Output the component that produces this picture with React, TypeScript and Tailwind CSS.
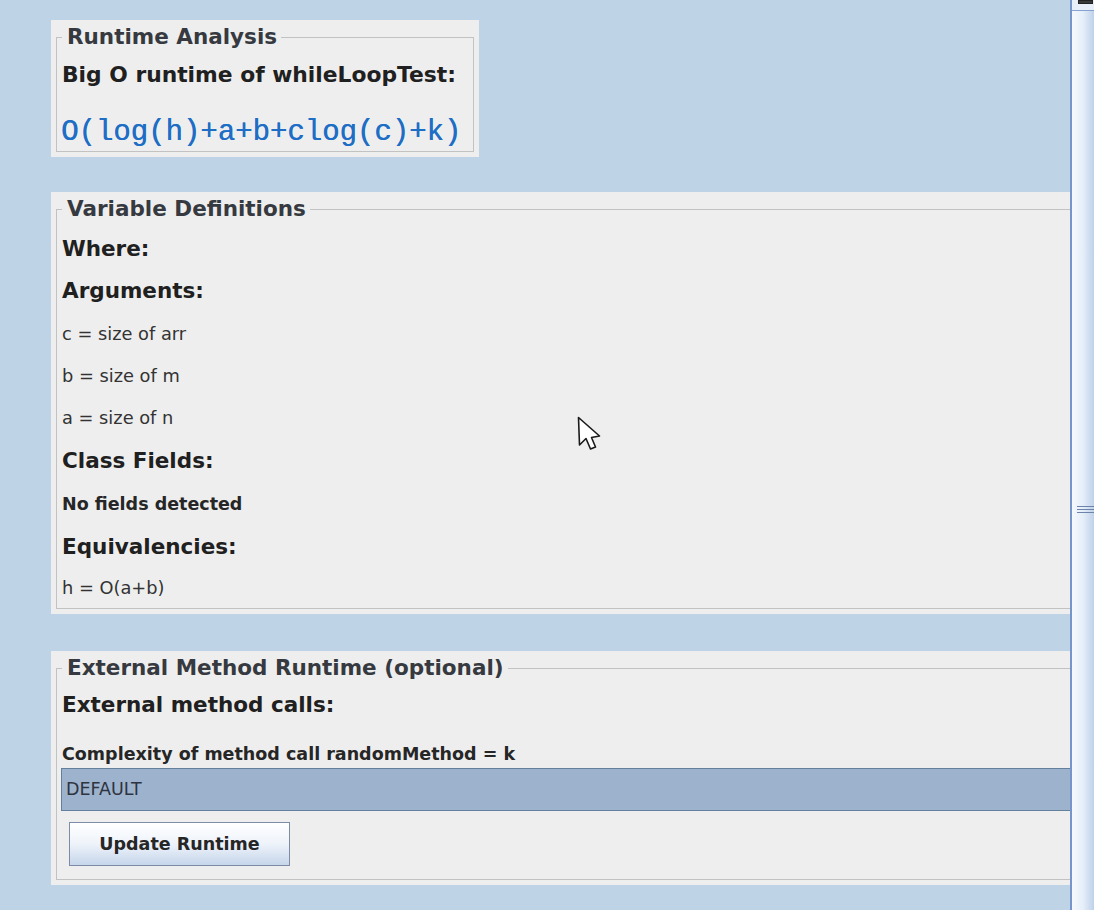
import React from 'react';

const argumentRows = [
  { text: 'c = size of arr', h: 'h-[42px]' },
  { text: 'b = size of m', h: 'h-[42px]' },
  { text: 'a = size of n', h: 'h-[43px]' },
];

function Legend({ children }: { children: React.ReactNode }) {
  return (
    <legend className="pl-[5px] pr-[4px] text-[21.5px] leading-[24px] font-bold text-[#363a40]">
      {children}
    </legend>
  );
}

function ScrollBar() {
  return (
    <div className="w-[24px] h-full flex flex-col border-l-2 border-[#7695cb] bg-[#dfe8f5]">
      <div className="h-[11px] flex justify-end border-b border-[#86a2d2] bg-[#e9eff8]">
        <div className="w-[15px] h-[4px] mr-[1px] bg-[#3a3a3a] border border-[#222]" />
      </div>
      <div className="flex-1 flex flex-col bg-gradient-to-r from-[#f6f9fe] via-[#e6eef9] to-[#bfd1ea]">
        <div className="mt-[495px] ml-[5px] flex flex-col gap-[2px]">
          <div className="h-[1px] bg-[#6c84aa]" />
          <div className="h-[1px] bg-[#6c84aa]" />
          <div className="h-[1px] bg-[#6c84aa]" />
        </div>
      </div>
    </div>
  );
}

export default function App() {
  return (
    <div className="relative w-[1094px] h-[910px] flex bg-[#bfd3e7] overflow-hidden font-['DejaVu_Sans',sans-serif]">
      <div className="flex-1 overflow-hidden pt-[20px] pl-[51px]">
        {/* Runtime Analysis */}
        <div className="w-[428px] p-[5px] bg-[#eeeeee]">
          <fieldset className="border border-[#c2c2c2] pl-[5px] pb-[3px]">
            <Legend>Runtime Analysis</Legend>
            <div className="mt-[13px] h-[26px] flex items-center text-[21.8px] font-bold text-[#202020] whitespace-nowrap">
              Big O runtime of whileLoopTest:
            </div>
            <div className="mt-[30px] h-[30px] -ml-[1px] flex items-center font-['Liberation_Mono',monospace] text-[29px] font-normal text-[#1e6ec6] whitespace-nowrap [text-shadow:0.4px_0_0_#1e6ec6]">
              O(log(h)+a+b+clog(c)+k)
            </div>
          </fieldset>
        </div>

        {/* Variable Definitions */}
        <div className="mt-[35px] w-[1040px] p-[5px] bg-[#eeeeee]">
          <fieldset className="border border-[#c2c2c2] pl-[5px]">
            <Legend>Variable Definitions</Legend>
            <div className="mt-[7px] h-[42px] flex items-center text-[21.5px] font-bold text-[#202020]">Where:</div>
            <div className="h-[43px] flex items-center text-[21.5px] font-bold text-[#202020]">Arguments:</div>
            {argumentRows.map((r) => (
              <div key={r.text} className={`${r.h} flex items-center text-[17.8px] text-[#333333]`}>
                {r.text}
              </div>
            ))}
            <div className="h-[43px] flex items-center text-[21.5px] font-bold text-[#202020]">Class Fields:</div>
            <div className="h-[42px] flex items-center text-[17.5px] font-bold text-[#262626]">No fields detected</div>
            <div className="h-[44px] flex items-center text-[21.5px] font-bold text-[#202020]">Equivalencies:</div>
            <div className="h-[39px] flex items-center text-[17.8px] text-[#333333]">h = O(a+b)</div>
          </fieldset>
        </div>

        {/* External Method Runtime */}
        <div className="mt-[37px] w-[1040px] p-[5px] bg-[#eeeeee]">
          <fieldset className="border border-[#c2c2c2] pl-[5px] pb-[13px]">
            <Legend>External Method Runtime (optional)</Legend>
            <div className="mt-[4px] h-[42px] flex items-center text-[21.5px] font-bold text-[#202020]">
              External method calls:
            </div>
            <div className="mt-[14px] h-[28px] flex items-center text-[17.5px] font-bold text-[#262626]">
              Complexity of method call randomMethod = k
            </div>
            <div className="-ml-[1px] h-[43px] flex items-center pl-[4px] bg-[#9db3cd] border border-[#64809f] text-[17.5px] text-[#2e3440]">
              DEFAULT
            </div>
            <button className="mt-[11px] ml-[7px] w-[221px] h-[44px] flex items-center justify-center border border-[#7c8ca6] bg-gradient-to-b from-white via-[#eef3fa] to-[#c6d6eb] text-[17.5px] font-bold text-[#262626]">
              Update Runtime
            </button>
          </fieldset>
        </div>
      </div>

      <ScrollBar />

      {/* mouse pointer */}
      <svg className="absolute left-[577px] top-[416px]" width="26" height="36" viewBox="0 0 26 36">
        <polygon
          points="1.5,1.5 2.5,29 9,22.5 13.5,33 18.5,31 14.5,21.5 22.5,20"
          fill="white"
          stroke="#1a1a1a"
          strokeWidth="1.6"
          strokeLinejoin="round"
        />
      </svg>
    </div>
  );
}
